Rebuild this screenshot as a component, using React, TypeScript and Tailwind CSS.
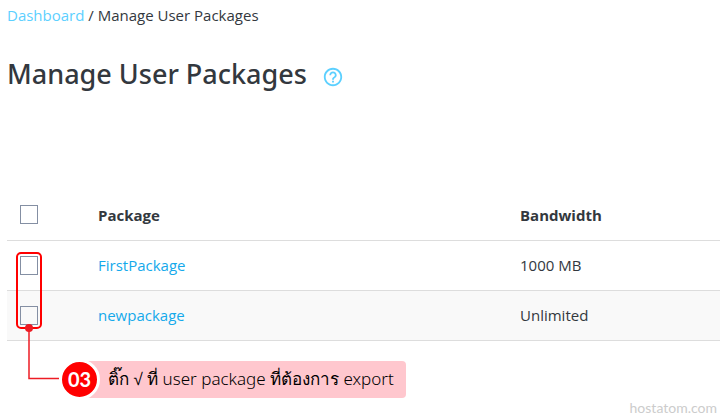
import React, { useState } from 'react';

interface UserPackage {
  name: string;
  bandwidth: string;
}

const packages: UserPackage[] = [
  { name: 'FirstPackage', bandwidth: '1000 MB' },
  { name: 'newpackage', bandwidth: 'Unlimited' },
];

const checkboxClass =
  'block h-[19px] w-[18px] appearance-none border border-[#848fa3] bg-transparent checked:bg-[#848fa3]';

function App() {
  const [selected, setSelected] = useState<string[]>([]);

  const toggle = (name: string) => {
    setSelected(selected.includes(name) ? selected.filter(n => n !== name) : [...selected, name]);
  };

  const toggleAll = () => {
    setSelected(selected.length === packages.length ? [] : packages.map(p => p.name));
  };

  return (
    <div className="flex min-h-screen flex-col bg-white pl-[7px] font-['Open_Sans',sans-serif] text-[15px] leading-5 text-[#33383e]">
      <nav aria-label="Breadcrumb" className="pt-[5px]">
        <a href="#dashboard" className="text-[#5cd0ff]">Dashboard</a> / Manage User Packages
      </nav>

      <header className="mt-[29px] flex items-center gap-[15px]">
        <h1 className="font-['Noto_Sans',sans-serif] text-[27px] leading-10 font-medium">Manage User Packages</h1>
        <button type="button" aria-label="Help" className="mt-1.5 text-[#5cd0ff]">
          <svg width="22" height="22" viewBox="0 0 24 24" fill="currentColor">
            <path d="M11 18h2v-2h-2v2zm1-16C6.48 2 2 6.48 2 12s4.480 10 10 10 10-4.480 10-10S17.520 2 12 2zm0 18c-4.410 0-8-3.590-8-8s3.590-8 8-8 8 3.590 8 8-3.590 8-8 8zm0-14c-2.210 0-4 1.790-4 4h2c0-1.100.9-2 2-2s2 .9 2 2c0 2-3 1.750-3 5h2c0-2.250 3-2.500 3-5 0-2.210-1.790-4-4-4z" />
          </svg>
        </button>
      </header>

      <section className="relative mt-24">
        <table className="w-full table-fixed border-collapse text-left">
          <thead>
            <tr className="h-[50px] border-b border-[#dddddd]">
              <th className="w-[91px] pl-[13px]">
                <input type="checkbox" aria-label="Select all packages" className={checkboxClass} checked={selected.length === packages.length} onChange={toggleAll} />
              </th>
              <th className="w-[422px]">Package</th>
              <th>Bandwidth</th>
            </tr>
          </thead>
          <tbody>
            {packages.map(p => (
              <tr key={p.name} className="h-[50px] border-b border-[#dddddd] even:bg-[#f9f9f9]">
                <td className="pl-[13px]">
                  <input type="checkbox" aria-label={`Select ${p.name}`} className={checkboxClass} checked={selected.includes(p.name)} onChange={() => toggle(p.name)} />
                </td>
                <td>
                  <a href={`#${p.name}`} className="text-[#14a9eb]">{p.name}</a>
                </td>
                <td>{p.bandwidth}</td>
              </tr>
            ))}
          </tbody>
        </table>

        {/* Highlight around the row checkboxes, with the line down to the callout */}
        <div className="pointer-events-none absolute top-[62px] left-[9px] h-[77px] w-[26px] rounded-[5px] border-2 border-[#ff0000]" />
        <svg className="pointer-events-none absolute top-[133px] left-[17px]" width="36" height="58" fill="none">
          <path d="M5 5v50.500h30" stroke="#ed1c24" strokeWidth="1.500" />
          <circle cx="5" cy="5" r="4" fill="#ed1c24" />
        </svg>
      </section>

      <div className="mt-[18px] ml-[52px] flex items-center">
        <div className="z-10 flex size-[41px] shrink-0 items-center justify-center rounded-full border-[3px] border-white bg-[#ff0000] font-['Lato',sans-serif] text-[20px] font-bold text-white">
          03
        </div>
        <p className="-ml-5 flex h-[37px] items-center rounded bg-[#ffc7ce] pr-3 pl-7 font-['Noto_Sans',sans-serif] text-[17px] font-light whitespace-pre text-black">
          ติ๊ก √ ที่ user package ที่ต้องการ export
        </p>
      </div>

      <footer className="mt-auto pr-[3px] text-right font-['Lato',sans-serif] text-[14px] leading-4 text-[#cccccc]">
        hostatom.com
      </footer>
    </div>
  );
}

export default App;
